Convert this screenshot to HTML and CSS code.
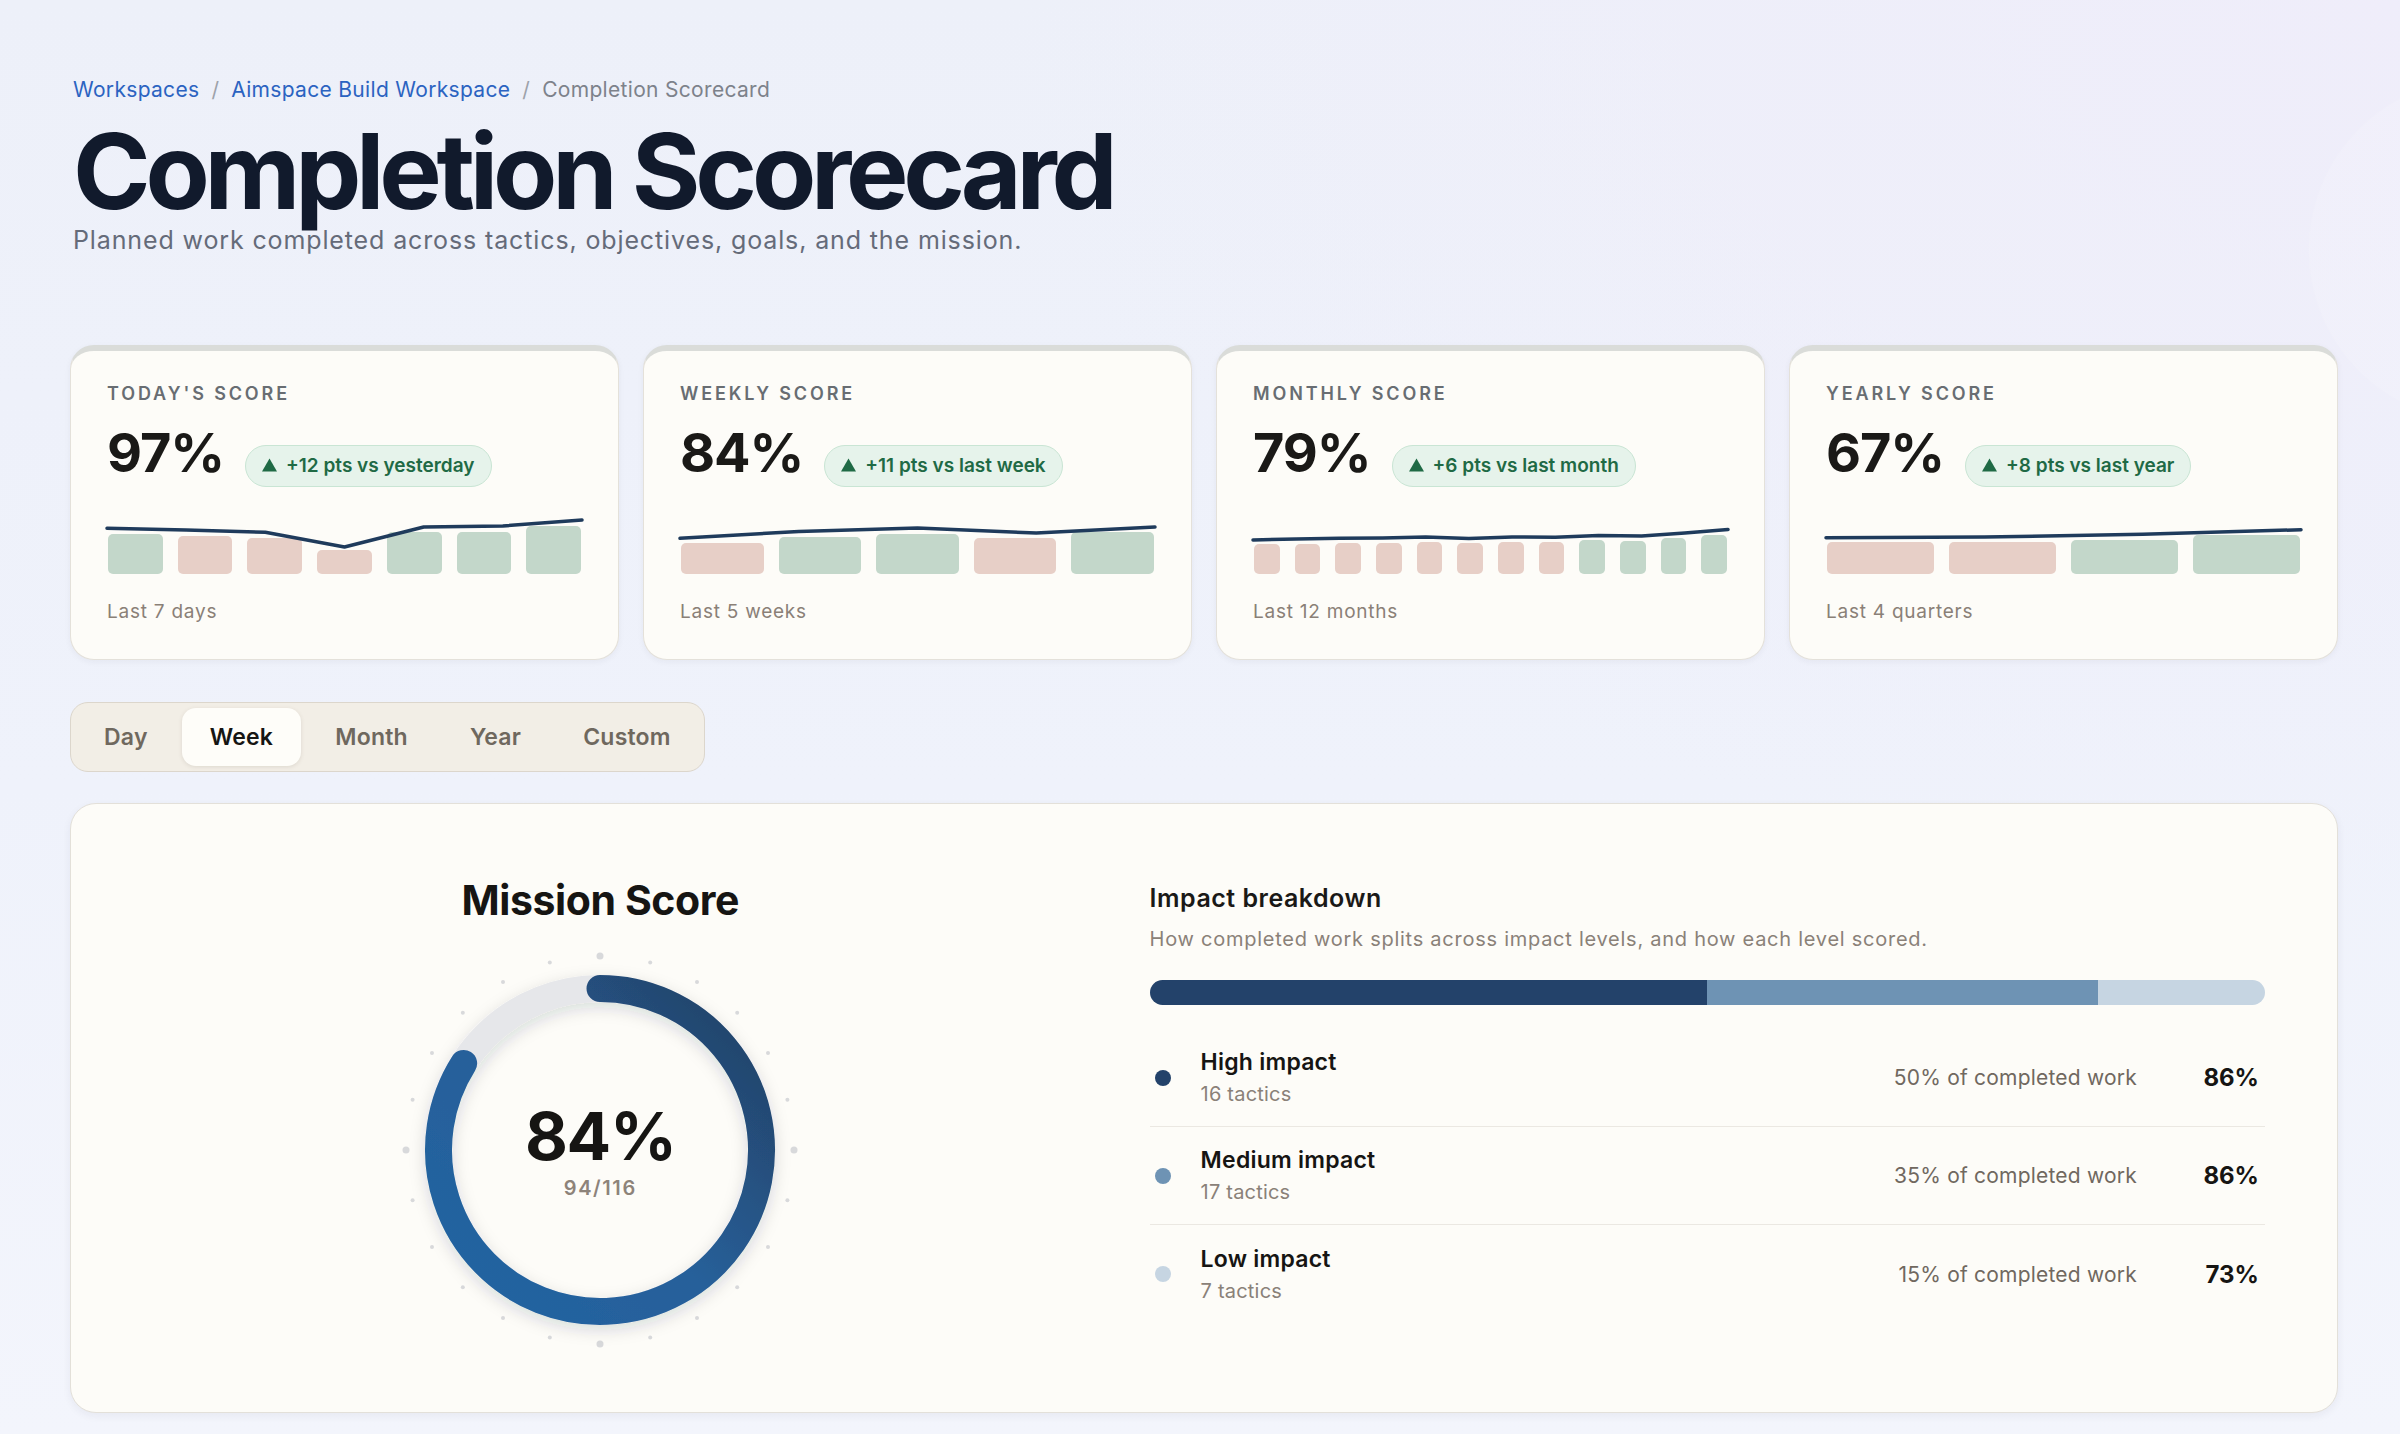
FILE: index.html
```html
<!DOCTYPE html>
<html lang="en">
<head>
<meta charset="utf-8">
<title>Completion Scorecard</title>
<link rel="stylesheet" href="styles.css">
</head>
<body>
<main class="page">
  <nav class="crumbs">
    <a href="#">Workspaces</a><span class="sep">/</span><a href="#">Aimspace Build Workspace</a><span class="sep">/</span><span class="current">Completion Scorecard</span>
  </nav>

  <header class="page-head">
    <h1>Completion Scorecard</h1>
    <p>Planned work completed across tactics, objectives, goals, and the mission.</p>
  </header>

  <section class="score-grid">
    <article class="score-card">
      <div class="label">Today's Score</div>
      <div class="value-row">
        <span class="value">97%</span>
        <span class="delta"><svg class="tri" viewBox="0 0 16 14"><path d="M8 0 16 14H0Z"/></svg>+12 pts vs yesterday</span>
      </div>
      <div class="spark">
        <div class="bars">
          <span class="bar up" style="height:40px"></span>
          <span class="bar down" style="height:38px"></span>
          <span class="bar down" style="height:36px"></span>
          <span class="bar down" style="height:24px"></span>
          <span class="bar up" style="height:42px"></span>
          <span class="bar up" style="height:42px"></span>
          <span class="bar up" style="height:48px"></span>
        </div>
        <svg class="trend" viewBox="0 0 100 60" preserveAspectRatio="none"><polyline points="0,14.3 16.67,16 33.33,18.3 50,33 66.67,13 83.33,12 100,6"/></svg>
      </div>
      <div class="range">Last 7 days</div>
    </article>

    <article class="score-card">
      <div class="label">Weekly Score</div>
      <div class="value-row">
        <span class="value">84%</span>
        <span class="delta"><svg class="tri" viewBox="0 0 16 14"><path d="M8 0 16 14H0Z"/></svg>+11 pts vs last week</span>
      </div>
      <div class="spark">
        <div class="bars">
          <span class="bar down" style="height:31px"></span>
          <span class="bar up" style="height:37px"></span>
          <span class="bar up" style="height:40px"></span>
          <span class="bar down" style="height:36px"></span>
          <span class="bar up" style="height:42px"></span>
        </div>
        <svg class="trend" viewBox="0 0 100 60" preserveAspectRatio="none"><polyline points="0,24.3 25,17.5 50,14 75,19 100,13"/></svg>
      </div>
      <div class="range">Last 5 weeks</div>
    </article>

    <article class="score-card">
      <div class="label">Monthly Score</div>
      <div class="value-row">
        <span class="value">79%</span>
        <span class="delta"><svg class="tri" viewBox="0 0 16 14"><path d="M8 0 16 14H0Z"/></svg>+6 pts vs last month</span>
      </div>
      <div class="spark">
        <div class="bars">
          <span class="bar down" style="height:30px"></span>
          <span class="bar down" style="height:30px"></span>
          <span class="bar down" style="height:31px"></span>
          <span class="bar down" style="height:31px"></span>
          <span class="bar down" style="height:32px"></span>
          <span class="bar down" style="height:31px"></span>
          <span class="bar down" style="height:32px"></span>
          <span class="bar down" style="height:32px"></span>
          <span class="bar up" style="height:34px"></span>
          <span class="bar up" style="height:33px"></span>
          <span class="bar up" style="height:36px"></span>
          <span class="bar up" style="height:39px"></span>
        </div>
        <svg class="trend" viewBox="0 0 100 60" preserveAspectRatio="none"><polyline points="0,26 9.09,25 18.18,24.3 27.27,24 36.36,23 45.45,24.5 54.55,23 63.64,23.3 72.73,21.5 81.82,22 90.91,19 100,15.5"/></svg>
      </div>
      <div class="range">Last 12 months</div>
    </article>

    <article class="score-card">
      <div class="label">Yearly Score</div>
      <div class="value-row">
        <span class="value">67%</span>
        <span class="delta"><svg class="tri" viewBox="0 0 16 14"><path d="M8 0 16 14H0Z"/></svg>+8 pts vs last year</span>
      </div>
      <div class="spark">
        <div class="bars">
          <span class="bar down" style="height:32px"></span>
          <span class="bar down" style="height:32px"></span>
          <span class="bar up" style="height:34px"></span>
          <span class="bar up" style="height:39px"></span>
        </div>
        <svg class="trend" viewBox="0 0 100 60" preserveAspectRatio="none"><polyline points="0,23.7 33.33,23 66.67,20.3 100,15.7"/></svg>
      </div>
      <div class="range">Last 4 quarters</div>
    </article>
  </section>

  <div class="period-tabs">
    <button class="tab">Day</button>
    <button class="tab active">Week</button>
    <button class="tab">Month</button>
    <button class="tab">Year</button>
    <button class="tab">Custom</button>
  </div>

  <section class="mission-panel">
    <div class="mission">
      <h2>Mission Score</h2>
      <div class="gauge">
        <svg class="gauge-svg" viewBox="0 0 420 420" width="420" height="420">
          <defs>
            <linearGradient id="ringFill" x1="1" y1="0" x2="0" y2="1">
              <stop offset="0" stop-color="#223f62"/>
              <stop offset="0.55" stop-color="#28609a"/>
              <stop offset="1" stop-color="#2064a2"/>
            </linearGradient>
            <filter id="ringShadow" x="-20%" y="-20%" width="140%" height="140%">
              <feDropShadow dx="0" dy="5" stdDeviation="8" flood-color="#1c2840" flood-opacity="0.15"/>
            </filter>
          </defs>
          <g class="ticks">
            <circle cx="210" cy="16" r="3.5"/>
            <circle cx="260.21" cy="22.61" r="2"/>
            <circle cx="307" cy="41.99" r="2"/>
            <circle cx="347.18" cy="72.82" r="2"/>
            <circle cx="378.01" cy="113" r="2"/>
            <circle cx="397.39" cy="159.79" r="2"/>
            <circle cx="404" cy="210" r="3.5"/>
            <circle cx="397.39" cy="260.21" r="2"/>
            <circle cx="378.01" cy="307" r="2"/>
            <circle cx="347.18" cy="347.18" r="2"/>
            <circle cx="307" cy="378.01" r="2"/>
            <circle cx="260.21" cy="397.39" r="2"/>
            <circle cx="210" cy="404" r="3.5"/>
            <circle cx="159.79" cy="397.39" r="2"/>
            <circle cx="113" cy="378.01" r="2"/>
            <circle cx="72.82" cy="347.18" r="2"/>
            <circle cx="41.99" cy="307" r="2"/>
            <circle cx="22.61" cy="260.21" r="2"/>
            <circle cx="16" cy="210" r="3.5"/>
            <circle cx="22.61" cy="159.79" r="2"/>
            <circle cx="41.99" cy="113" r="2"/>
            <circle cx="72.82" cy="72.82" r="2"/>
            <circle cx="113" cy="41.99" r="2"/>
            <circle cx="159.79" cy="22.61" r="2"/>
          </g>
          <g filter="url(#ringShadow)">
            <circle class="ring-track" cx="210" cy="210" r="161.5"/>
            <path class="ring-fill" d="M210 48.5A161.5 161.5 0 1 1 73.65 123.47"/>
          </g>
        </svg>
        <div class="gauge-center">
          <span class="gauge-value">84%</span>
          <span class="gauge-count">94/116</span>
        </div>
      </div>
    </div>

    <div class="impact">
      <h3>Impact breakdown</h3>
      <p class="impact-sub">How completed work splits across impact levels, and how each level scored.</p>
      <div class="stack">
        <span class="seg high" style="width:50%"></span>
        <span class="seg medium" style="width:35%"></span>
        <span class="seg low" style="width:15%"></span>
      </div>
      <ul class="impact-list">
        <li class="impact-row">
          <span class="dot high"></span>
          <div class="impact-name">
            <strong>High impact</strong>
            <span>16 tactics</span>
          </div>
          <span class="share">50% of completed work</span>
          <span class="level-score">86%</span>
        </li>
        <li class="impact-row">
          <span class="dot medium"></span>
          <div class="impact-name">
            <strong>Medium impact</strong>
            <span>17 tactics</span>
          </div>
          <span class="share">35% of completed work</span>
          <span class="level-score">86%</span>
        </li>
        <li class="impact-row">
          <span class="dot low"></span>
          <div class="impact-name">
            <strong>Low impact</strong>
            <span>7 tactics</span>
          </div>
          <span class="share">15% of completed work</span>
          <span class="level-score">73%</span>
        </li>
      </ul>
    </div>
  </section>
</main>
</body>
</html>
```

FILE: styles.css
```css
* {
  box-sizing: border-box;
  margin: 0;
  padding: 0;
}

body {
  min-height: 100vh;
  font-family: Inter, "Noto Sans", "Liberation Sans", sans-serif;
  color: #161513;
  background:
    radial-gradient(circle at 2480px 250px, rgba(255, 255, 255, 0.14) 0 170px, rgba(255, 255, 255, 0) 172px),
    radial-gradient(ellipse 1400px 900px at 100% 0%, #efedfa 0%, rgba(239, 237, 250, 0) 100%),
    linear-gradient(180deg, #edf0f9 0%, #eff2fb 55%, #f3f5fc 100%);
}

.page {
  padding: 77px 62px 22px 70px;
}

/* breadcrumb */
.crumbs {
  padding-left: 3px;
  font-size: 21px;
  line-height: 1.2;
  letter-spacing: 0.015em;
  color: #7d828b;
}

.crumbs a {
  color: #2b63c1;
  text-decoration: none;
}

.crumbs .sep {
  margin: 0 12px;
  color: #9da2aa;
}

/* page heading */
.page-head {
  padding-left: 3px;
}

.page-head h1 {
  margin-top: 16px;
  font-size: 105px;
  line-height: 1;
  font-weight: 700;
  letter-spacing: -0.05em;
  color: #111a2c;
}

.page-head p {
  margin-top: 1px;
  font-size: 25px;
  line-height: 1.3;
  letter-spacing: 0.035em;
  color: #656b79;
}

/* score cards */
.score-grid {
  margin-top: 88px;
  display: grid;
  grid-template-columns: repeat(4, minmax(0, 1fr));
  gap: 24px;
}

.score-card {
  background: #fdfcf8;
  border: 1.5px solid #e4e1da;
  border-top: 6px solid #dadcd9;
  border-radius: 24px;
  padding: 32px 36px 34px;
  box-shadow: 0 2px 6px rgba(40, 40, 60, 0.05);
}

.label {
  font-size: 18px;
  line-height: 1.2;
  font-weight: 600;
  letter-spacing: 0.16em;
  text-transform: uppercase;
  color: #686d72;
}

.value-row {
  margin-top: 22px;
  display: flex;
  align-items: baseline;
  gap: 21px;
}

.value {
  font-size: 54px;
  line-height: 1;
  font-weight: 700;
  letter-spacing: -0.02em;
  color: #1a1917;
}

.delta {
  display: inline-flex;
  align-items: baseline;
  padding: 9px 16px;
  font-size: 19px;
  line-height: 22px;
  font-weight: 600;
  color: #1f6a45;
  background: #e6f3eb;
  border: 1.5px solid #c9e5d4;
  border-radius: 999px;
  white-space: nowrap;
}

.tri {
  width: 15px;
  height: 14px;
  margin-right: 9px;
  fill: #1f6a45;
}

.spark {
  position: relative;
  margin-top: 27px;
  height: 60px;
}

.bars {
  height: 100%;
  display: flex;
  align-items: flex-end;
  gap: 15px;
  padding: 0 1px;
}

.bar {
  flex: 1;
  border-radius: 5px;
}

.bar.up {
  background: #c3d7ca;
}

.bar.down {
  background: #e7cfc7;
}

.trend {
  position: absolute;
  inset: 0;
  width: 100%;
  height: 100%;
  overflow: visible;
}

.trend polyline {
  fill: none;
  stroke: #1f3b5c;
  stroke-width: 3.5;
  stroke-linecap: round;
  stroke-linejoin: round;
  vector-effect: non-scaling-stroke;
}

.range {
  margin-top: 26px;
  font-size: 19px;
  line-height: 1.3;
  letter-spacing: 0.04em;
  color: #8a8077;
}

/* period switcher */
.period-tabs {
  margin-top: 42px;
  display: inline-flex;
  gap: 6px;
  padding: 5px;
  background: #f2eee6;
  border: 1.5px solid #dcd6cc;
  border-radius: 18px;
}

.tab {
  height: 58px;
  padding: 0 28px;
  border: 0;
  border-radius: 14px;
  background: transparent;
  font-family: inherit;
  font-size: 23px;
  font-weight: 600;
  letter-spacing: 0.01em;
  color: #6f685e;
}

.tab.active {
  background: #fefdf9;
  color: #161513;
  box-shadow: 0 1px 4px rgba(70, 60, 40, 0.12);
}

/* mission panel */
.mission-panel {
  margin-top: 31px;
  display: grid;
  grid-template-columns: minmax(0, 0.82fr) minmax(0, 1fr);
  gap: 92px;
  padding: 72px 72px 52px;
  background: #fdfcf8;
  border: 1.5px solid #e3e0d9;
  border-radius: 26px;
  box-shadow: 0 3px 8px rgba(40, 40, 60, 0.06);
}

.mission {
  display: flex;
  flex-direction: column;
  align-items: center;
}

.mission h2 {
  font-size: 41px;
  line-height: 1.2;
  font-weight: 700;
  letter-spacing: -0.01em;
  color: #161513;
}

.gauge {
  position: relative;
  margin-top: 15px;
  width: 420px;
  height: 420px;
}

.gauge-svg {
  display: block;
  overflow: visible;
}

.ticks circle {
  fill: #d8d9db;
}

.ring-track {
  fill: none;
  stroke: #e6e7ea;
  stroke-width: 27;
}

.ring-fill {
  fill: none;
  stroke: url(#ringFill);
  stroke-width: 27;
  stroke-linecap: round;
}

.gauge-center {
  position: absolute;
  inset: 0;
  display: flex;
  flex-direction: column;
  align-items: center;
  justify-content: center;
  padding-top: 3px;
}

.gauge-value {
  font-size: 66px;
  line-height: 1;
  font-weight: 700;
  letter-spacing: -0.02em;
  color: #161513;
}

.gauge-count {
  margin-top: 7px;
  font-size: 20px;
  line-height: 1.2;
  font-weight: 600;
  letter-spacing: 0.08em;
  color: #8d837a;
}

/* impact breakdown */
.impact {
  padding-top: 7px;
}

.impact h3 {
  font-size: 25px;
  line-height: 1.25;
  font-weight: 600;
  letter-spacing: 0.02em;
  color: #1a1917;
}

.impact-sub {
  margin-top: 12px;
  font-size: 20px;
  line-height: 1.3;
  letter-spacing: 0.037em;
  color: #8a8178;
}

.stack {
  margin-top: 28px;
  height: 25px;
  display: flex;
  border-radius: 13px;
  overflow: hidden;
}

.seg.high,
.dot.high {
  background: #23426a;
}

.seg.medium,
.dot.medium {
  background: #6e93b4;
}

.seg.low,
.dot.low {
  background: #c6d5e2;
}

.impact-list {
  margin-top: 24px;
  list-style: none;
}

.impact-row {
  height: 98px;
  display: flex;
  align-items: center;
  border-bottom: 1.5px solid #ebe8e2;
}

.impact-row:last-child {
  border-bottom: 0;
}

.dot {
  width: 16px;
  height: 16px;
  margin-left: 5px;
  margin-right: 30px;
  border-radius: 50%;
  flex: none;
}

.impact-name {
  display: flex;
  flex-direction: column;
  gap: 3px;
}

.impact-name strong {
  font-size: 23px;
  line-height: 1.3;
  font-weight: 600;
  letter-spacing: 0.01em;
  color: #161513;
}

.impact-name span {
  font-size: 20px;
  line-height: 1.3;
  letter-spacing: 0.01em;
  color: #8a8178;
}

.share {
  margin-left: auto;
  font-size: 21px;
  letter-spacing: 0.01em;
  color: #70685f;
}

.level-score {
  width: 122px;
  margin-right: 6px;
  text-align: right;
  font-size: 24px;
  font-weight: 700;
  color: #161513;
}
```
